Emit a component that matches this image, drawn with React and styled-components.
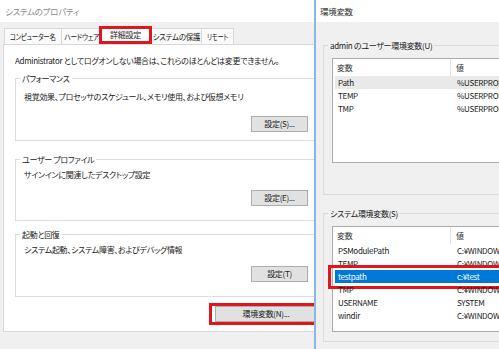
import React from "react";
import styled, { createGlobalStyle, css } from "styled-components";

const GlobalStyle = createGlobalStyle`
  html, body {
    margin: 0;
    padding: 0;
    background: #f0f0f0;
  }

  body {
    font-family: "Noto Sans CJK JP", "Noto Sans", sans-serif;
    font-size: 8px;
    letter-spacing: -0.3px;
    color: #1a1a1a;
    font-feature-settings: "palt";
  }
`;

const RED = "#e0161f";

const tabs = [
  { name: "コンピューター名", width: 58, squeeze: 0.8 },
  { name: "ハードウェア", width: 41, squeeze: 0.84 },
  { name: "詳細設定", width: 53, selected: true },
  { name: "システムの保護", width: 52, squeeze: 0.94 },
  { name: "リモート", width: 33, squeeze: 0.78 }
];

const groups = [
  { label: "パフォーマンス", text: "視覚効果、プロセッサのスケジュール、メモリ使用、および仮想メモリ", button: "設定(S)...", mt: 10, textMt: 5, btnMt: 12, padB: 8 },
  { label: "ユーザー プロファイル", text: "サインインに関連したデスクトップ設定", button: "設定(E)...", mt: 18, textMt: 2, btnMt: 8, padB: 14 },
  { label: "起動と回復", text: "システム起動、システム障害、およびデバッグ情報", button: "設定(T)", mt: 13, textMt: 2, btnMt: 9, padB: 14 }
];

const userVars = [
  { name: "Path", value: "%USERPROFILE%\\AppData\\Local\\Microsoft\\WindowsApps;", state: "muted" },
  { name: "TEMP", value: "%USERPROFILE%\\AppData\\Local\\Temp" },
  { name: "TMP", value: "%USERPROFILE%\\AppData\\Local\\Temp" }
];

const systemVars = [
  { name: "PSModulePath", value: "C:¥WINDOWS¥system32¥WindowsPowerShell¥v1.0¥Modules¥" },
  { name: "TEMP", value: "C:¥WINDOWS¥TEMP" },
  { name: "testpath", value: "c:¥test", state: "active" },
  { name: "TMP", value: "C:¥WINDOWS¥TEMP" },
  { name: "USERNAME", value: "SYSTEM" },
  { name: "windir", value: "C:¥WINDOWS" }
];

const Screen = styled.div`
  display: flex;
  width: 499px;
  height: 349px;
  overflow: hidden;
  background: #f0f0f0;
`;

const Window = styled.div`
  display: flex;
  flex-direction: column;
  height: 100%;
  overflow: hidden;
  background: #f0f0f0;

  ${(p) =>
    p.$side === "left"
      ? css`
          width: 314px;
          flex-shrink: 0;
        `
      : css`
          flex: 1;
          min-width: 0;
          border-left: 2px solid #8cb6e2;
        `}
`;

const TitleBar = styled.div`
  height: 22px;
  flex-shrink: 0;
  display: flex;
  align-items: center;
  padding-left: ${(p) => p.$inset}px;
  background: #fff;
  color: ${(p) => (p.$active ? "#2b2b2b" : "#8c8c8c")};
  font-size: 8.5px;
  white-space: nowrap;
`;

const LeftBody = styled.div`
  width: 330px;
  flex-shrink: 0;
  padding: 4px 0 0 3px;
  box-sizing: border-box;
`;

const TabStrip = styled.div`
  display: flex;
  align-items: flex-end;
  height: 18px;
  padding-left: 1px;
`;

const Tab = styled.div`
  position: relative;
  display: flex;
  align-items: center;
  justify-content: center;
  width: ${(p) => p.$width}px;
  height: 16px;
  margin-right: -1px;
  border: 1px solid #d9d9d9;
  border-bottom: none;
  box-sizing: border-box;
  background: #fafafa;
  white-space: nowrap;

  ${(p) =>
    p.$selected &&
    css`
      z-index: 1;
      height: 18px;
      margin: 0 -2px 0 -2px;
      background: #fff;
      border: none;
      box-shadow: inset 0 0 0 3px ${RED};
    `}
`;

const TabLabel = styled.span`
  display: inline-block;
  line-height: 14px;
  transform: scaleX(${(p) => p.$squeeze || 1});
`;

const TabPanel = styled.div`
  background: #fff;
  border: 1px solid #d9d9d9;
  padding: 9px 11px 6px;
`;

const Note = styled.div`
  line-height: 14px;
  white-space: nowrap;
`;

const Group = styled.div`
  margin-top: ${(p) => p.$mt || 0}px;
  border: 1px solid #dcdcdc;
  padding: 0 9px ${(p) => p.$padBottom ?? 9}px 8px;
`;

const GroupLabel = styled.div`
  width: fit-content;
  margin: -6px 0 0 -4px;
  padding: 0 2px;
  line-height: 12px;
  background: ${(p) => p.$bg || "#fff"};
  white-space: nowrap;
`;

const GroupText = styled.div`
  margin-top: ${(p) => p.$mt}px;
  line-height: 14px;
  white-space: nowrap;
`;

const ButtonRow = styled.div`
  display: flex;
  justify-content: flex-end;
  margin-top: ${(p) => p.$mt || 0}px;
`;

const Button = styled.div`
  width: ${(p) => p.$width}px;
  height: 16px;
  line-height: 14px;
  box-sizing: border-box;
  border: 1px solid #adadad;
  background: #e1e1e1;
  text-align: center;
  white-space: nowrap;
`;

const Highlight = styled.div`
  border: 3px solid ${RED};
  padding: 0 1px 0 3px;
  margin-right: -3px;
`;

const RightBody = styled.div`
  width: 380px;
  padding: 23px 0 0 7px;
`;

const ListView = styled.div`
  margin-top: 6px;
  height: ${(p) => p.$height}px;
  background: #fff;
  border: 1px solid #adadad;
  box-sizing: border-box;
`;

const HeaderRow = styled.div`
  display: grid;
  grid-template-columns: 118px 1fr;
  height: 17px;
  line-height: 17px;
  color: #333;
`;

const HeaderCell = styled.div`
  padding-left: ${(p) => (p.$first ? 4 : 5)}px;
  border-right: 1px solid #e5e5e5;
`;

const Row = styled.div`
  position: relative;
  display: grid;
  grid-template-columns: 119px 1fr;
  height: 13px;
  line-height: 13px;
  margin-left: 2px;
  white-space: nowrap;

  ${(p) =>
    p.$state === "muted" &&
    css`
      background: #e9e9e9;
    `}

  ${(p) =>
    p.$state === "active" &&
    css`
      background: #0078d7;
      color: #fff;

      &::after {
        content: "";
        position: absolute;
        top: -5px;
        bottom: -6px;
        left: -7px;
        right: -10px;
        border: 3px solid ${RED};
      }
    `}
`;

const Cell = styled.div`
  padding-left: 3px;
  overflow: hidden;
`;

const VarList = ({ rows, height }) => (
  <ListView $height={height}>
    <HeaderRow>
      <HeaderCell $first>変数</HeaderCell>
      <HeaderCell>値</HeaderCell>
    </HeaderRow>
    {rows.map((row) => (
      <Row key={row.name + row.value} $state={row.state}>
        <Cell>{row.name}</Cell>
        <Cell>{row.value}</Cell>
      </Row>
    ))}
  </ListView>
);

const App = () => {
  return (
    <>
      <GlobalStyle />
      <Screen>
        <Window $side="left">
          <TitleBar $inset={5}>システムのプロパティ</TitleBar>
          <LeftBody>
            <TabStrip>
              {tabs.map((tab) => (
                <Tab key={tab.name} $width={tab.width} $selected={tab.selected}>
                  <TabLabel $squeeze={tab.squeeze}>{tab.name}</TabLabel>
                </Tab>
              ))}
            </TabStrip>
            <TabPanel>
              <Note>Administrator としてログオンしない場合は、これらのほとんどは変更できません。</Note>
              {groups.map((g) => (
                <Group key={g.label} $mt={g.mt} $padBottom={g.padB}>
                  <GroupLabel>{g.label}</GroupLabel>
                  <GroupText $mt={g.textMt}>{g.text}</GroupText>
                  <ButtonRow $mt={g.btnMt}>
                    <Button $width={57}>{g.button}</Button>
                  </ButtonRow>
                </Group>
              ))}
              <ButtonRow $mt={6}>
                <Highlight>
                  <Button $width={102}>環境変数(N)...</Button>
                </Highlight>
              </ButtonRow>
            </TabPanel>
          </LeftBody>
        </Window>
        <Window $side="right">
          <TitleBar $inset={4} $active>
            環境変数
          </TitleBar>
          <RightBody>
            <Group $padBottom={31}>
              <GroupLabel $bg="#f0f0f0">admin のユーザー環境変数(U)</GroupLabel>
              <VarList rows={userVars} height={105} />
            </Group>
            <Group $mt={18}>
              <GroupLabel $bg="#f0f0f0">システム環境変数(S)</GroupLabel>
              <VarList rows={systemVars} height={106} />
            </Group>
          </RightBody>
        </Window>
      </Screen>
    </>
  );
};

export default App;
